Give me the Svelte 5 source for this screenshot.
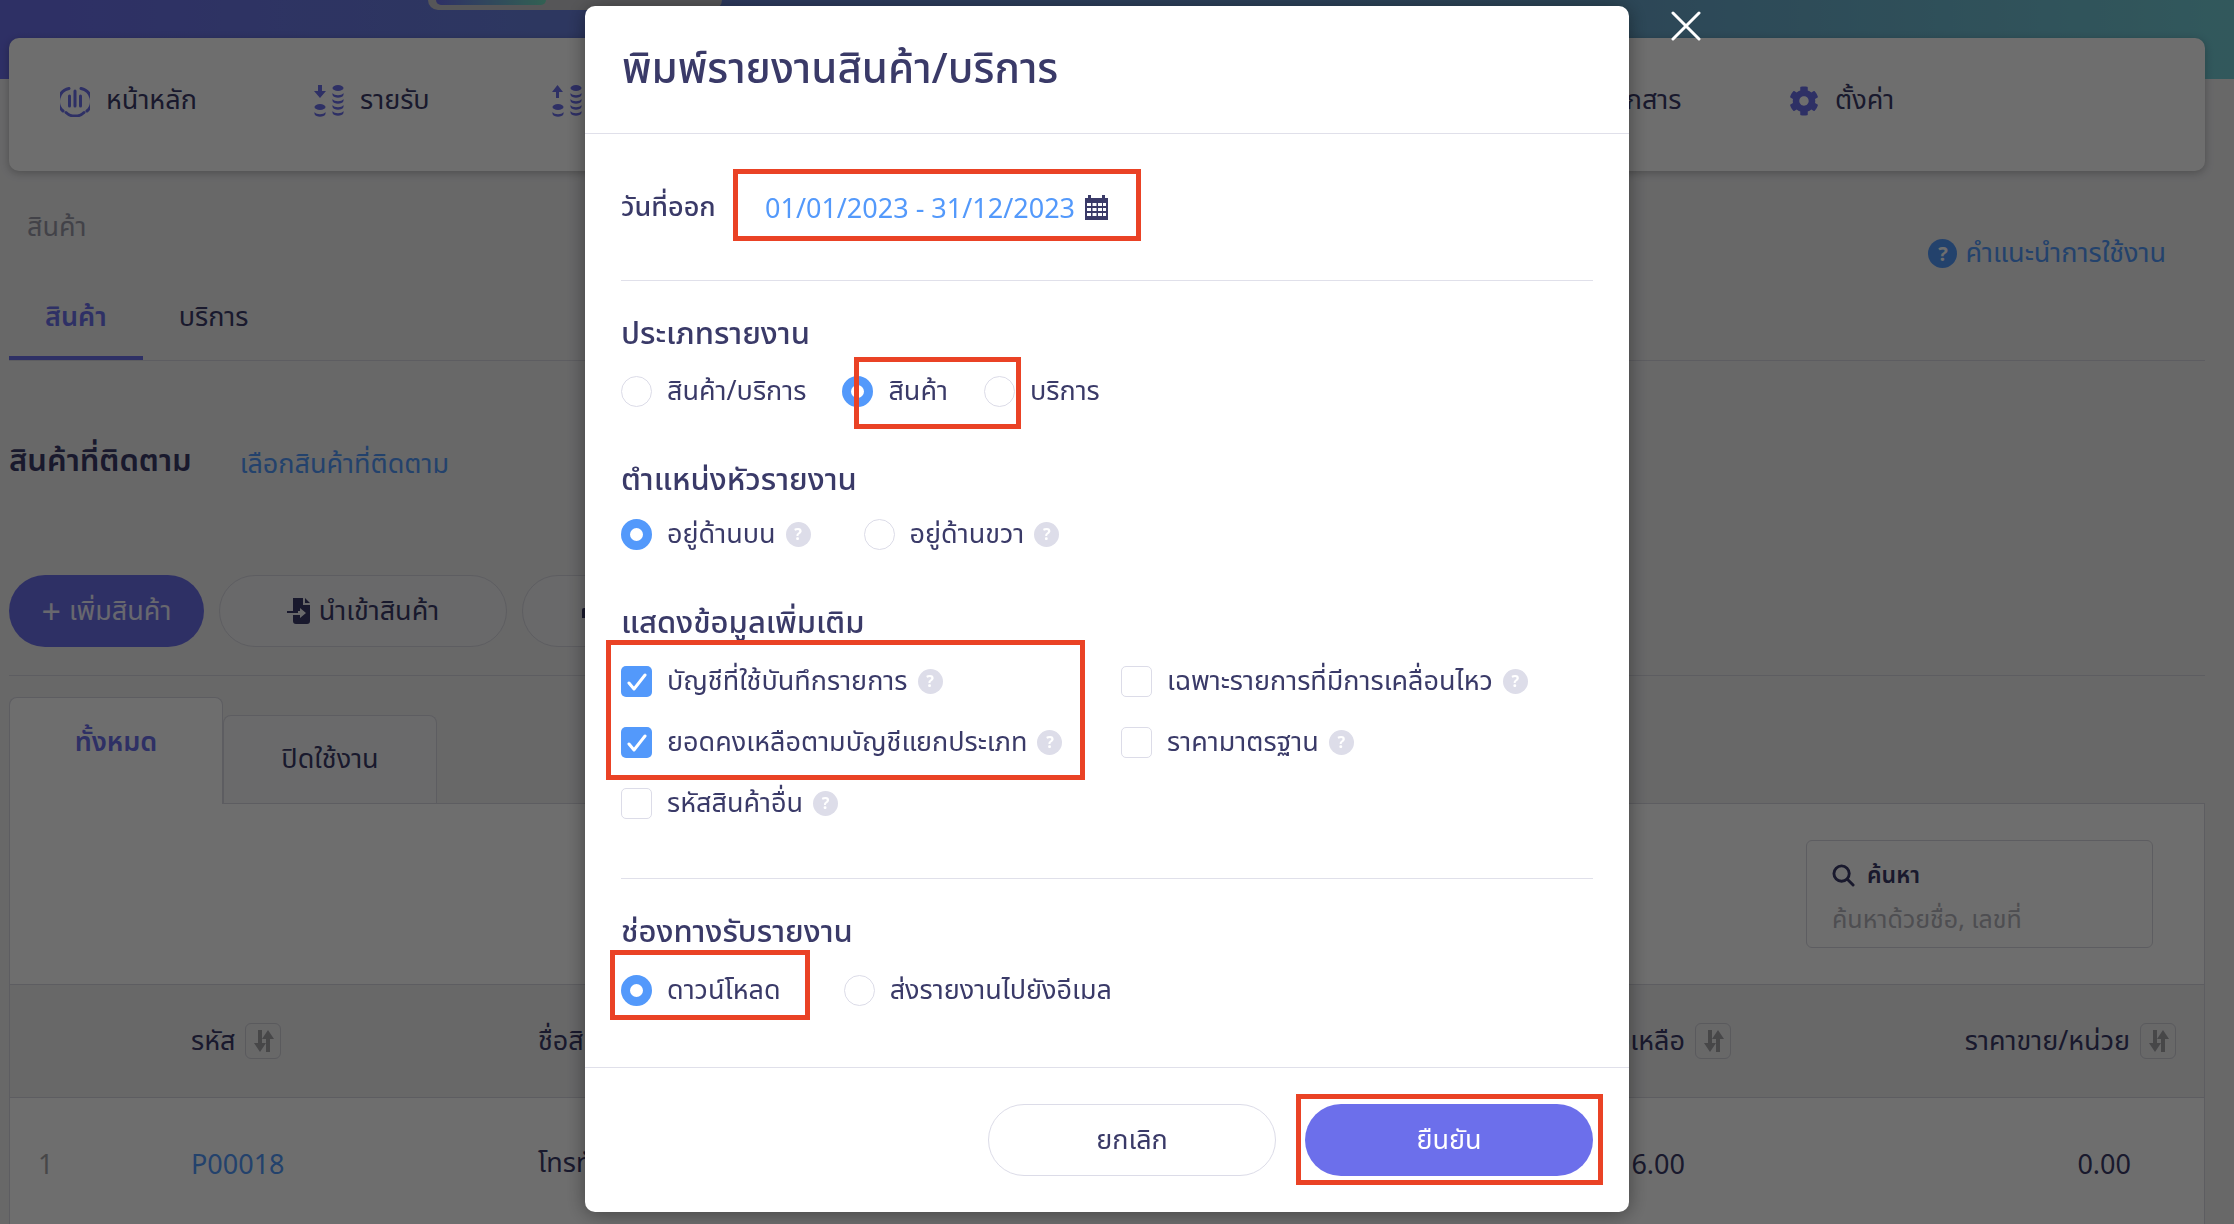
<script>
  const navItems = [
    { label: 'หน้าหลัก', icon: 'home' },
    { label: 'รายรับ', icon: 'down' },
    { label: 'รายจ่าย', icon: 'up' },
    { label: 'สินค้า', icon: 'box' },
    { label: 'ผู้ติดต่อ', icon: 'box' },
    { label: 'บัญชี', icon: 'box' },
    { label: 'คลังเอกสาร', icon: 'folder' },
    { label: 'ตั้งค่า', icon: 'gear' }
  ]
  const typeOptions = [
    { label: 'สินค้า/บริการ', on: false },
    { label: 'สินค้า', on: true },
    { label: 'บริการ', on: false }
  ]
  const headOptions = [
    { label: 'อยู่ด้านบน', on: true },
    { label: 'อยู่ด้านขวา', on: false }
  ]
  const extras = [
    { label: 'บัญชีที่ใช้บันทึกรายการ', on: true },
    { label: 'เฉพาะรายการที่มีการเคลื่อนไหว', on: false },
    { label: 'ยอดคงเหลือตามบัญชีแยกประเภท', on: true },
    { label: 'ราคามาตรฐาน', on: false },
    { label: 'รหัสสินค้าอื่น', on: false }
  ]
  const channels = [
    { label: 'ดาวน์โหลด', on: true },
    { label: 'ส่งรายงานไปยังอีเมล', on: false }
  ]
</script>

{#snippet sort()}
  <span class="sort">
    <svg viewBox="0 0 24 26" width="24" height="26" fill="#a4a4a8">
      <path d="M7 2h4v13h4l-6 9-6-9h4zM17 2l6 9h-4v13h-4V11h-4z" />
    </svg>
  </span>
{/snippet}

{#snippet help()}
  <span class="help">?</span>
{/snippet}

{#snippet navIcon(kind)}
  {#if kind === 'home'}
    <svg viewBox="0 0 30 32" width="30" height="32" fill="none" stroke="#6c6feb" stroke-width="3">
      <path d="M9 3.5A13 13 0 0 0 3 26" stroke-linecap="round" transform="translate(0 0)" />
      <path d="M21 3.5A13 13 0 0 1 27 26M6 27.5a13 13 0 0 0 18 0" stroke-linecap="round" />
      <path d="M15 6v15M9.5 11v10M20.5 11v10" stroke-linecap="round" />
    </svg>
  {:else if kind === 'down' || kind === 'up'}
    <svg viewBox="0 0 30 32" width="30" height="32" fill="#6c6feb">
      {#if kind === 'down'}
        <path d="M3 0h4v6h4l-6 7-6-7h4z" transform="translate(1 0)" />
      {:else}
        <path d="M4 13h3V7h4L5.500 0 0 7h4z" transform="translate(0 0)" />
      {/if}
      <ellipse cx="6" cy="22" rx="5.500" ry="3" />
      <path d="M.5 27c2 3 9 3 11 0v2c-1 3.500-10 3.500-11 0z" />
      <ellipse cx="24" cy="3" rx="5.500" ry="3" />
      <path d="M18.500 8c2 3 9 3 11 0v2c-1 3.500-10 3.500-11 0zM18.500 14c2 3 9 3 11 0v2c-1 3.500-10 3.500-11 0zM18.500 20c2 3 9 3 11 0v2c-1 3.500-10 3.500-11 0zM18.500 26c2 3 9 3 11 0v2c-1 3.500-10 3.500-11 0z" />
    </svg>
  {:else if kind === 'folder'}
    <svg viewBox="0 0 576 512" width="33" height="30" fill="#6c6feb">
      <path d="M572.694 292.093L500.27 416.248A63.997 63.997 0 0 1 444.989 448H45.025c-18.523 0-30.064-20.093-20.731-36.093l72.424-124.155A64 64 0 0 1 152 256h399.964c18.523 0 30.064 20.093 20.73 36.093zM152 224h328v-48c0-26.51-21.49-48-48-48H272l-64-64H48C21.49 64 0 85.49 0 112v278.046l69.077-118.418C86.214 242.25 117.989 224 152 224z" />
    </svg>
  {:else if kind === 'gear'}
    <svg viewBox="0 0 512 512" width="30" height="30" fill="#6c6feb">
      <path d="M487.4 315.7l-42.6-24.6c4.3-23.2 4.3-47 0-70.2l42.6-24.6c4.9-2.8 7.1-8.6 5.5-14-11.1-35.6-30-67.8-54.7-94.6-3.8-4.1-10-5.1-14.8-2.3L380.8 110c-17.9-15.4-38.5-27.3-60.8-35.1V25.8c0-5.600-3.900-10.500-9.400-11.700-36.700-8.200-74.300-7.800-109.200 0-5.500 1.200-9.400 6.100-9.400 11.700V75c-22.200 7.900-42.800 19.800-60.800 35.100L88.700 85.500c-4.900-2.800-11-1.900-14.800 2.300-24.700 26.700-43.600 58.900-54.700 94.600-1.700 5.400.6 11.200 5.500 14L67.300 221c-4.300 23.200-4.300 47 0 70.200l-42.600 24.600c-4.900 2.800-7.100 8.600-5.500 14 11.100 35.600 30 67.800 54.700 94.600 3.800 4.100 10 5.100 14.800 2.300l42.600-24.600c17.900 15.400 38.500 27.300 60.800 35.100v49.200c0 5.600 3.900 10.500 9.400 11.700 36.700 8.200 74.300 7.800 109.200 0 5.500-1.200 9.400-6.100 9.400-11.700v-49.200c22.200-7.900 42.800-19.800 60.800-35.100l42.600 24.600c4.900 2.800 11 1.900 14.800-2.300 24.700-26.700 43.600-58.900 54.700-94.600 1.500-5.500-.7-11.300-5.600-14.100zM256 336c-44.100 0-80-35.900-80-80s35.900-80 80-80 80 35.900 80 80-35.900 80-80 80z" />
    </svg>
  {:else}
    <span class="icon-blank"></span>
  {/if}
{/snippet}

<div class="page">
  <header class="top">
    <div class="logo"><span class="logo-on"></span></div>
  </header>

  <nav class="nav">
    {#each navItems as item}
      <a class="nav-item">
        {@render navIcon(item.icon)}
        <span>{item.label}</span>
      </a>
    {/each}
  </nav>

  <main class="content">
    <div class="crumb">สินค้า</div>
    <div class="tabs">
      <span class="tab active">สินค้า</span>
      <span class="tab">บริการ</span>
      <a class="guide"><span class="guide-dot">?</span>คำแนะนำการใช้งาน</a>
    </div>

    <div class="follow">
      <h2>สินค้าที่ติดตาม</h2>
      <a>เลือกสินค้าที่ติดตาม</a>
    </div>

    <div class="actions">
      <button class="btn primary"><span class="plus">+</span> เพิ่มสินค้า</button>
      <button class="btn outline">
        <svg viewBox="0 0 24 26" width="24" height="26" fill="#3a3a68">
          <path d="M6 0h10v7h7v16a3 3 0 0 1-3 3H9a3 3 0 0 1-3-3v-6h7v3l6-5-6-5v3H6zM18 0l5 5h-5z" />
          <path d="M0 13h11v2H0z" />
        </svg>
        นำเข้าสินค้า
      </button>
      <button class="btn outline">
        <svg viewBox="0 0 24 24" width="24" height="24" fill="#3a3a68">
          <path d="M5 1h14v7H5zM2 9h20a2 2 0 0 1 2 2v8h-5v4H5v-4H0v-8a2 2 0 0 1 2-2z" />
        </svg>
        พิมพ์รายงาน
      </button>
    </div>

    <div class="subtabs">
      <span class="subtab active">ทั้งหมด</span>
      <span class="subtab">ปิดใช้งาน</span>
    </div>

    <section class="panel">
      <div class="filters">
        <div class="search">
          <div class="search-title">
            <svg viewBox="0 0 24 24" width="23" height="23" fill="none" stroke="#3a3a68" stroke-width="3" stroke-linecap="round">
              <circle cx="10" cy="10" r="8" /><path d="M16 16l6 6" />
            </svg>
            ค้นหา
          </div>
          <div class="search-hint">ค้นหาด้วยชื่อ, เลขที่</div>
        </div>
      </div>
      <div class="row head">
        <span></span>
        <span class="cell">รหัส {@render sort()}</span>
        <span class="cell">ชื่อสินค้า</span>
        <span class="cell end">จำนวนคงเหลือ {@render sort()}</span>
        <span class="cell end">ราคาขาย/หน่วย {@render sort()}</span>
      </div>
      <div class="row body">
        <span class="num">1</span>
        <span class="code">P00018</span>
        <span>โทรทัศน์</span>
        <span class="val qty">-16.00</span>
        <span class="val price">0.00</span>
      </div>
    </section>
  </main>
</div>

<div class="overlay">
  <svg class="close" viewBox="0 0 30 30" width="30" height="30" stroke="#fff" stroke-width="3" stroke-linecap="round">
    <path d="M2 2l26 26M28 2L2 28" />
  </svg>

  <div class="modal">
    <div class="modal-head">พิมพ์รายงานสินค้า/บริการ</div>

    <div class="modal-body">
      <div class="date-row">
        <span class="date-label">วันที่ออก</span>
        <div class="date-input">
          <span>01/01/2023 - 31/12/2023</span>
          <svg viewBox="0 0 23 25" width="23" height="25">
            <path fill="#3a3a68" d="M3 0h3v3h11V0h3v3h3v22H0V3h3z" />
            <path fill="#fff" d="M2 8h4v3H2zM7.500 8h4v3h-4zM13 8h4v3h-4zM18 8h3v3h-3zM2 13h4v3H2zM7.500 13h4v3h-4zM13 13h4v3h-4zM18 13h3v3h-3zM2 18h4v3H2zM7.500 18h4v3h-4zM13 18h4v3h-4zM18 18h3v3h-3z" />
          </svg>
        </div>
      </div>

      <hr />

      <h3 class="first">ประเภทรายงาน</h3>
      <div class="choices type">
        {#each typeOptions as o}
          <label class="choice"><span class="radio" class:on={o.on}></span>{o.label}</label>
        {/each}
      </div>

      <h3>ตำแหน่งหัวรายงาน</h3>
      <div class="choices head-pos">
        {#each headOptions as o}
          <label class="choice"><span class="radio" class:on={o.on}></span>{o.label}{@render help()}</label>
        {/each}
      </div>

      <h3>แสดงข้อมูลเพิ่มเติม</h3>
      <div class="extras">
        {#each extras as o}
          <label class="choice">
            <span class="check" class:on={o.on}>
              {#if o.on}
                <svg viewBox="0 0 20 20" width="20" height="20" fill="none" stroke="#fff" stroke-width="3" stroke-linecap="round" stroke-linejoin="round"><path d="M2 11l5 6L18 3" /></svg>
              {/if}
            </span>
            {o.label}{@render help()}
          </label>
        {/each}
      </div>

      <hr class="second" />

      <h3 class="first">ช่องทางรับรายงาน</h3>
      <div class="choices channel">
        {#each channels as o}
          <label class="choice"><span class="radio" class:on={o.on}></span>{o.label}</label>
        {/each}
      </div>
    </div>

    <div class="modal-foot">
      <button class="foot-btn">ยกเลิก</button>
      <button class="foot-btn confirm">ยืนยัน</button>
    </div>

    <!-- red annotation boxes drawn on top of the dialog -->
    <span class="mark m-date"></span>
    <span class="mark m-type"></span>
    <span class="mark m-extra"></span>
    <span class="mark m-channel"></span>
    <span class="mark m-confirm"></span>
  </div>
</div>

<style>
  :global(body) {
    margin: 0;
    background: #f0f0f2;
    overflow: hidden;
  }

  .page,
  .overlay {
    font-family: "Noto Sans", "Noto Sans Thai", "Noto Sans Thai UI", sans-serif;
    color: #3a3a68;
    font-size: 27px;
  }

  .page {
    height: 1224px;
    overflow: hidden;
  }

  a { color: inherit; }

  .top {
    height: 79px;
    background: linear-gradient(90deg, #6c6feb 0%, #66a0c8 70%, #74cdd6 100%);
  }

  .logo {
    width: 294px;
    height: 10px;
    margin-left: 428px;
    box-sizing: border-box;
    padding: 0 0 5px 8px;
    background: #c8c8cc;
    border-radius: 0 0 20px 20px;
  }

  .logo-on {
    display: block;
    width: 110px;
    height: 5px;
    background: linear-gradient(90deg, #6c6feb, #74e0c0);
    border-radius: 0 0 8px 8px;
  }

  .nav {
    display: grid;
    grid-template-columns: 254px 238px 240px 280px 217px 218px 282px auto;
    align-items: center;
    height: 133px;
    margin: -41px 29px 0 9px;
    padding: 0 51px 8px;
    box-sizing: border-box;
    background: #fff;
    border-radius: 10px;
    box-shadow: 0 2px 8px rgba(0, 0, 0, 0.25);
    position: relative;
  }

  .nav-item {
    display: flex;
    align-items: center;
    gap: 16px;
  }

  .icon-blank {
    width: 30px;
    height: 30px;
    background: #6c6feb;
    border-radius: 4px;
  }

  .content {
    padding: 0 29px 0 9px;
  }

  .crumb {
    padding: 33px 0 0 18px;
    color: #9a9aa8;
    height: 70px;
    line-height: 44px;
  }

  .tabs {
    display: flex;
    align-items: center;
    height: 83px;
    border-bottom: 1px solid #d8d8e0;
    margin-top: 3px;
    position: relative;
  }

  .tab {
    padding: 0 36px;
    height: 83px;
    line-height: 77px;
    box-sizing: border-box;
  }

  .tab.active {
    color: #6c6feb;
    font-weight: 600;
    border-bottom: 4px solid #6c6feb;
  }

  .guide {
    margin: -130px 39px 0 auto;
    display: flex;
    align-items: center;
    gap: 8px;
    color: #5399fb;
  }

  .guide-dot {
    width: 29px;
    height: 29px;
    border-radius: 50%;
    background: #5399fb;
    color: #fff;
    font-size: 20px;
    font-weight: 700;
    text-align: center;
    line-height: 29px;
  }

  .follow {
    display: flex;
    align-items: center;
    gap: 48px;
    height: 200px;
    padding-bottom: 0;
    box-sizing: border-box;
    margin-bottom: 0;
  }

  .follow h2 {
    margin: 0;
    font-size: 31px;
    font-weight: 600;
  }

  .follow a {
    color: #5399fb;
    margin-top: 6px;
  }

  .actions {
    display: flex;
    gap: 15px;
    height: 101px;
    margin-top: 14px;
    padding-bottom: 28px;
    box-sizing: border-box;
    border-bottom: 1px solid #d8d8e0;
  }

  .btn {
    height: 72px;
    border-radius: 36px;
    font: inherit;
    color: inherit;
    background: #f4f4f6;
    border: 1px solid #d8d8e0;
    display: flex;
    align-items: center;
    justify-content: center;
    gap: 8px;
    padding: 0;
  }

  .btn.primary {
    width: 195px;
    background: #6c6feb;
    border: 0;
    color: #f0f0ff;
  }

  .plus { font-size: 34px; line-height: 1; }

  .btn.outline { width: 288px; }

  .subtabs {
    display: flex;
    align-items: flex-end;
    height: 127px;
    margin-top: 0;
  }

  .subtab {
    width: 214px;
    height: 88px;
    display: flex;
    align-items: center;
    justify-content: center;
    background: #f6f6f8;
    border: 1px solid #d8d8e0;
    border-bottom: 0;
    border-radius: 8px 8px 0 0;
    box-sizing: border-box;
  }

  .subtab.active {
    height: 107px;
    background: #fff;
    color: #6c6feb;
    font-weight: 600;
    padding-bottom: 18px;
    margin-bottom: -1px;
    position: relative;
  }

  .panel {
    border: 1px solid #d8d8e0;
    background: #fff;
  }

  .filters {
    height: 180px;
    display: flex;
    justify-content: flex-end;
    padding: 36px 51px 0 0;
    box-sizing: border-box;
  }

  .search {
    width: 347px;
    height: 108px;
    box-sizing: border-box;
    border: 1px solid #d8d8e0;
    border-radius: 6px;
    padding: 14px 25px;
    font-size: 23px;
  }

  .search-title {
    display: flex;
    align-items: center;
    gap: 12px;
    font-weight: 600;
    height: 40px;
  }

  .search-hint {
    color: #b4b4bc;
    margin-top: 6px;
    font-size: 25px;
  }

  .row {
    display: grid;
    grid-template-columns: 153px 347px 1fr 260px 445px;
    align-items: center;
    border-top: 1px solid #d8d8e0;
    padding: 0 28px;
  }

  .row.head {
    height: 112px;
    background: #f0f0f2;
  }

  .row.body {
    height: 130px;
  }

  .cell {
    display: flex;
    align-items: center;
    gap: 10px;
  }

  .cell.end { justify-content: flex-end; }

  .sort {
    width: 36px;
    height: 36px;
    border: 1px solid #d0d0d8;
    border-radius: 6px;
    display: flex;
    align-items: center;
    justify-content: center;
    box-sizing: border-box;
  }

  .num { color: #a4a4a8; }
  .code { color: #5399fb; }
  .val { text-align: right; }
  .val.qty { padding-right: 46px; }
  .val.price { padding-right: 45px; }

  .overlay {
    position: fixed;
    inset: 0;
    background: rgba(0, 0, 0, 0.57);
  }

  .close {
    position: absolute;
    left: 1671px;
    top: 11px;
  }

  .modal {
    position: relative;
    box-sizing: border-box;
    width: 1044px;
    height: 1206px;
    margin: 6px 0 0 585px;
    background: #fff;
    border-radius: 10px;
    box-shadow: 0 2px 20px rgba(0, 0, 0, 0.4);
    display: flex;
    flex-direction: column;
  }

  .modal-head {
    height: 127px;
    padding: 0 37px;
    display: flex;
    align-items: center;
    font-size: 42px;
    font-weight: 500;
    border-bottom: 1px solid #e0e0ea;
  }

  .modal-body {
    flex: 1;
    padding: 0 36px;
  }

  .date-row {
    display: flex;
    align-items: center;
    height: 146px;
  }

  .date-label {
    font-weight: 500;
    width: 111px;
    flex: none;
  }

  .date-input {
    flex: none;
    display: flex;
    align-items: center;
    gap: 10px;
    padding-left: 33px;
    color: #5399fb;
  }

  hr {
    margin: 0;
    border: 0;
    border-top: 1px solid #e0e0ea;
  }

  hr.second { margin-top: 44px; }

  h3 {
    margin: 0;
    font-size: 31px;
    font-weight: 500;
    height: 50px;
    line-height: 50px;
    margin-top: 31px;
  }

  h3.first { margin-top: 26px; }

  .choices {
    display: flex;
    height: 62px;
    align-items: center;
  }

  .choices.type { gap: 36px; margin-top: 3px; }
  .choices.head-pos { gap: 53px; }
  .choices.channel { gap: 63px; margin-top: 4px; }

  .choice {
    display: flex;
    align-items: center;
    gap: 15px;
  }

  .radio {
    width: 31px;
    height: 31px;
    box-sizing: border-box;
    flex: none;
    border-radius: 50%;
    border: 1px solid #dcdce8;
  }

  .radio.on {
    border: 9px solid #5399fb;
  }

  .check {
    width: 31px;
    height: 31px;
    flex: none;
    box-sizing: border-box;
    border: 1px solid #dcdce8;
    border-radius: 5px;
    display: flex;
    align-items: center;
    justify-content: center;
  }

  .check.on {
    background: #5399fb;
    border: 0;
  }

  .help {
    width: 25px;
    height: 25px;
    margin-left: -5px;
    border-radius: 50%;
    background: #dddde9;
    color: #fff;
    font-size: 16px;
    font-weight: 700;
    text-align: center;
    line-height: 25px;
    flex: none;
  }

  .extras {
    display: grid;
    grid-template-columns: 500px 1fr;
    grid-auto-rows: 61px;
    align-items: center;
    margin-top: 5px;
  }

  .modal-foot {
    height: 145px;
    box-sizing: border-box;
    border-top: 1px solid #e0e0ea;
    display: flex;
    justify-content: flex-end;
    gap: 29px;
    padding: 36px 36px 0;
  }

  .foot-btn {
    width: 288px;
    height: 72px;
    border-radius: 36px;
    border: 1px solid #dcdce8;
    background: #fff;
    color: inherit;
    font: inherit;
  }

  .foot-btn.confirm {
    background: #6c6feb;
    border: 0;
    color: #fff;
  }

  .mark {
    position: absolute;
    box-sizing: border-box;
    border: 5px solid #ea4225;
    pointer-events: none;
  }

  .m-date { left: 148px; top: 163px; width: 408px; height: 72px; }
  .m-type { left: 269px; top: 351px; width: 167px; height: 72px; }
  .m-extra { left: 21px; top: 634px; width: 479px; height: 140px; }
  .m-channel { left: 25px; top: 944px; width: 200px; height: 70px; }
  .m-confirm { left: 711px; top: 1088px; width: 307px; height: 91px; }
</style>
